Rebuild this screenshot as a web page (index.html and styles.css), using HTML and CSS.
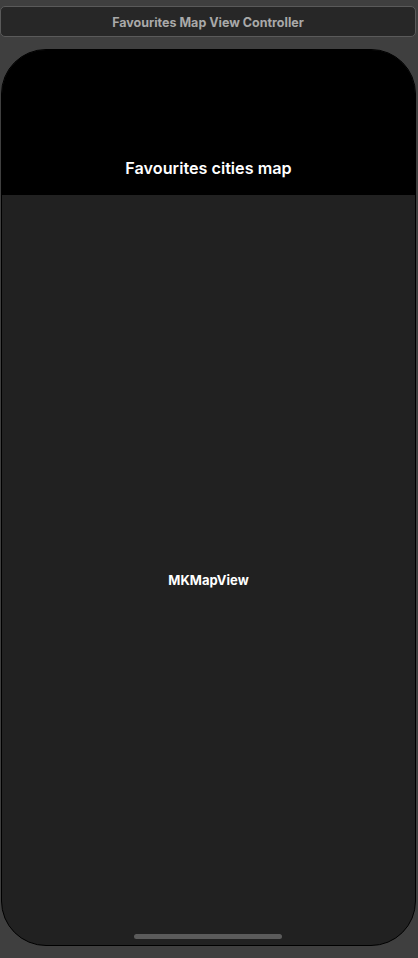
FILE: index.html
```html
<!DOCTYPE html>
<html>
<head>
<meta charset="utf-8">
<link rel="stylesheet" href="styles.css">
</head>
<body>
<div class="canvas">
  <div class="scene-title">Favourites Map View Controller</div>
  <div class="device">
    <div class="navbar"><span class="nav-title">Favourites cities map</span></div>
    <div class="map"><span class="map-label">MKMapView</span></div>
    <div class="home-indicator"></div>
  </div>
</div>
</body>
</html>
```
FILE: styles.css
```css
html, body {
  margin: 0;
  padding: 0;
  background: #3f3f3f;
  width: 418px;
  height: 958px;
  overflow: hidden;
  font-family: Inter, "Liberation Sans", sans-serif;
}
.canvas {
  padding-top: 6px;
  display: flex;
  flex-direction: column;
}
.scene-title {
  box-sizing: border-box;
  width: 416px;
  height: 31px;
  padding-top: 2px;
  border: 1px solid #5a5a5a;
  border-radius: 5px;
  background: #272727;
  color: #a9a9a9;
  font-weight: 700;
  font-size: 12.5px;
  display: flex;
  align-items: center;
  justify-content: center;
}
.device {
  position: relative;
  box-sizing: border-box;
  margin-top: 12px;
  margin-left: 1px;
  width: 415px;
  height: 897px;
  border: 1px solid #000;
  border-radius: 45px;
  overflow: hidden;
  background: #212121;
  display: flex;
  flex-direction: column;
}
.navbar {
  height: 145px;
  background: #000;
  display: flex;
  align-items: flex-end;
  justify-content: center;
  padding-bottom: 16px;
  box-sizing: border-box;
}
.nav-title {
  color: #fff;
  font-weight: 600;
  font-size: 16.2px;
  line-height: 22px;
}
.map {
  flex: 1;
  display: flex;
  align-items: center;
  justify-content: center;
  padding-top: 20px;
}
.map-label {
  color: #fff;
  font-weight: 700;
  font-size: 13px;
}
.home-indicator {
  position: absolute;
  left: 132px;
  bottom: 6px;
  width: 148px;
  height: 5px;
  border-radius: 3px;
  background: #5b5b5b;
}
```
